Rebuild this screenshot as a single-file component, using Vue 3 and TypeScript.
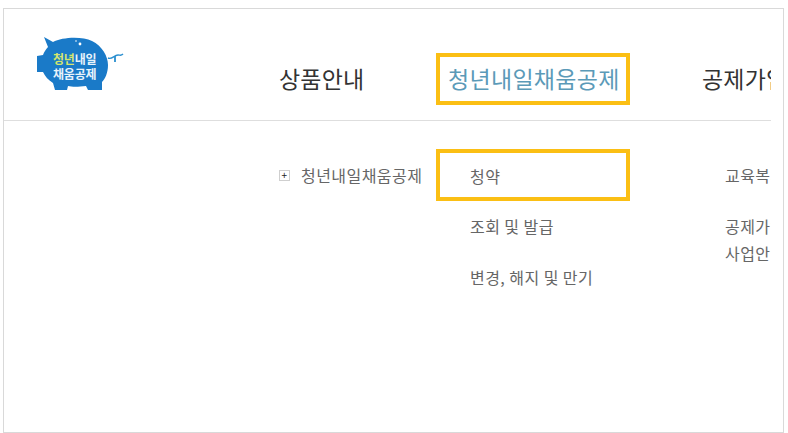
<script setup lang="ts">
const subItems: string[] = ['청약', '조회 및 발급', '변경, 해지 및 만기']
</script>

<template>
  <div class="frame">
    <div class="clip">
      <header class="header">
        <div class="logo">
          <svg width="92" height="60" viewBox="0 0 92 60">
            <path d="M8 1 L17 6 C26 1 46 0 56 5 C66 10 72 20 72 29 C72 37 69 43 66 46 L66 54 L52 54 L50 50 C42 51 36 51 32 50 L31 54 L19 54 L17 47 C12 44 9 40 7 36 L1 36 L1 20 L7 19 C8 16 10 13 12 11 Z" fill="#1a7ac8" />
            <path d="M72 22 C76 24 78 19 82 19 C84 19 85 20 87 18" fill="none" stroke="#2a8fd0" stroke-width="1.4" />
            <path d="M79 20 L79 26" stroke="#2a8fd0" stroke-width="1.8" />
            <circle cx="44" cy="8" r="1.4" fill="#fff" />
            <circle cx="40" cy="5" r="0.8" fill="#fff" />
            <text class="logo-text" x="17" y="28"><tspan fill="#d3e56e">청년</tspan><tspan fill="#e8f3fb">내일</tspan></text>
            <text class="logo-text" x="17" y="43" fill="#e8f3fb">채움공제</text>
          </svg>
        </div>
        <nav class="nav">
          <a class="nav-item first">상품안내</a>
          <a class="nav-item active">청년내일채움공제</a>
          <a class="nav-item last">공제가입</a>
        </nav>
      </header>
      <section class="body">
        <div class="side">
          <span class="plus">+</span>
          <span>청년내일채움공제</span>
        </div>
        <ul class="subs">
          <li v-for="(item, i) in subItems" :key="item" class="sub" :class="{ current: i === 0 }">{{ item }}</li>
        </ul>
        <div class="extra">
          <p class="extra-one">교육복지</p>
          <p>공제가입</p>
          <p>사업안내</p>
        </div>
      </section>
    </div>
  </div>
</template>

<style>
html, body { margin: 0; background: #fff; }
</style>

<style scoped>
.frame {
  box-sizing: border-box;
  width: 781px;
  height: 425px;
  margin: 8px 0 0 3px;
  border: 1px solid #d9d9d9;
  font-family: "Noto Sans CJK KR", "Noto Sans", sans-serif;
  overflow: hidden;
}
.clip {
  width: 767px;
  height: 100%;
  overflow: hidden;
}
.header {
  display: flex;
  height: 111px;
  border-bottom: 1px solid #dedede;
}
.logo {
  width: 272px;
  flex: none;
  padding: 27px 0 0 32px;
  box-sizing: border-box;
}
.logo-text {
  font-size: 12px;
  font-weight: 700;
  letter-spacing: -0.2px;
}
.nav {
  display: flex;
  align-items: flex-start;
  padding-top: 44px;
  white-space: nowrap;
}
.nav-item {
  box-sizing: border-box;
  height: 52px;
  line-height: 50px;
  font-size: 23px;
  letter-spacing: 0.2px;
  color: #333;
}
.first { width: 160px; padding-left: 3px; }
.active {
  width: 194px;
  border: 4px solid #fbbf14;
  padding-left: 8px;
  line-height: 42px;
  letter-spacing: 0.3px;
  color: #5b9ab8;
}
.last {
  flex: none;
  margin-left: 72px;
}
.body {
  display: flex;
  align-items: flex-start;
  padding-top: 28px;
  white-space: nowrap;
  letter-spacing: 0.45px;
}
.side {
  width: 432px;
  flex: none;
  box-sizing: border-box;
  padding: 14px 0 0 275px;
  display: flex;
  align-items: center;
  font-size: 16px;
  line-height: 24px;
  color: #666;
}
.plus {
  box-sizing: border-box;
  width: 11px;
  height: 11px;
  border: 1px solid #cfcfcf;
  margin-right: 11px;
  display: flex;
  align-items: center;
  justify-content: center;
  font-size: 10px;
  line-height: 1;
  color: #222;
}
.subs {
  list-style: none;
  margin: 0;
  padding: 0;
  width: 194px;
  flex: none;
}
.sub {
  box-sizing: border-box;
  height: 51px;
  padding: 13px 0 0 34px;
  font-size: 16px;
  line-height: 24px;
  color: #666;
}
.sub.current {
  height: 52px;
  border: 4px solid #fbbf14;
  padding: 11px 0 0 30px;
}
.extra {
  margin-left: 95px;
  font-size: 16px;
  line-height: 27px;
  color: #666;
  padding-top: 13px;
}
.extra p { margin: 0; }
.extra-one { margin-bottom: 24px !important; }
</style>
